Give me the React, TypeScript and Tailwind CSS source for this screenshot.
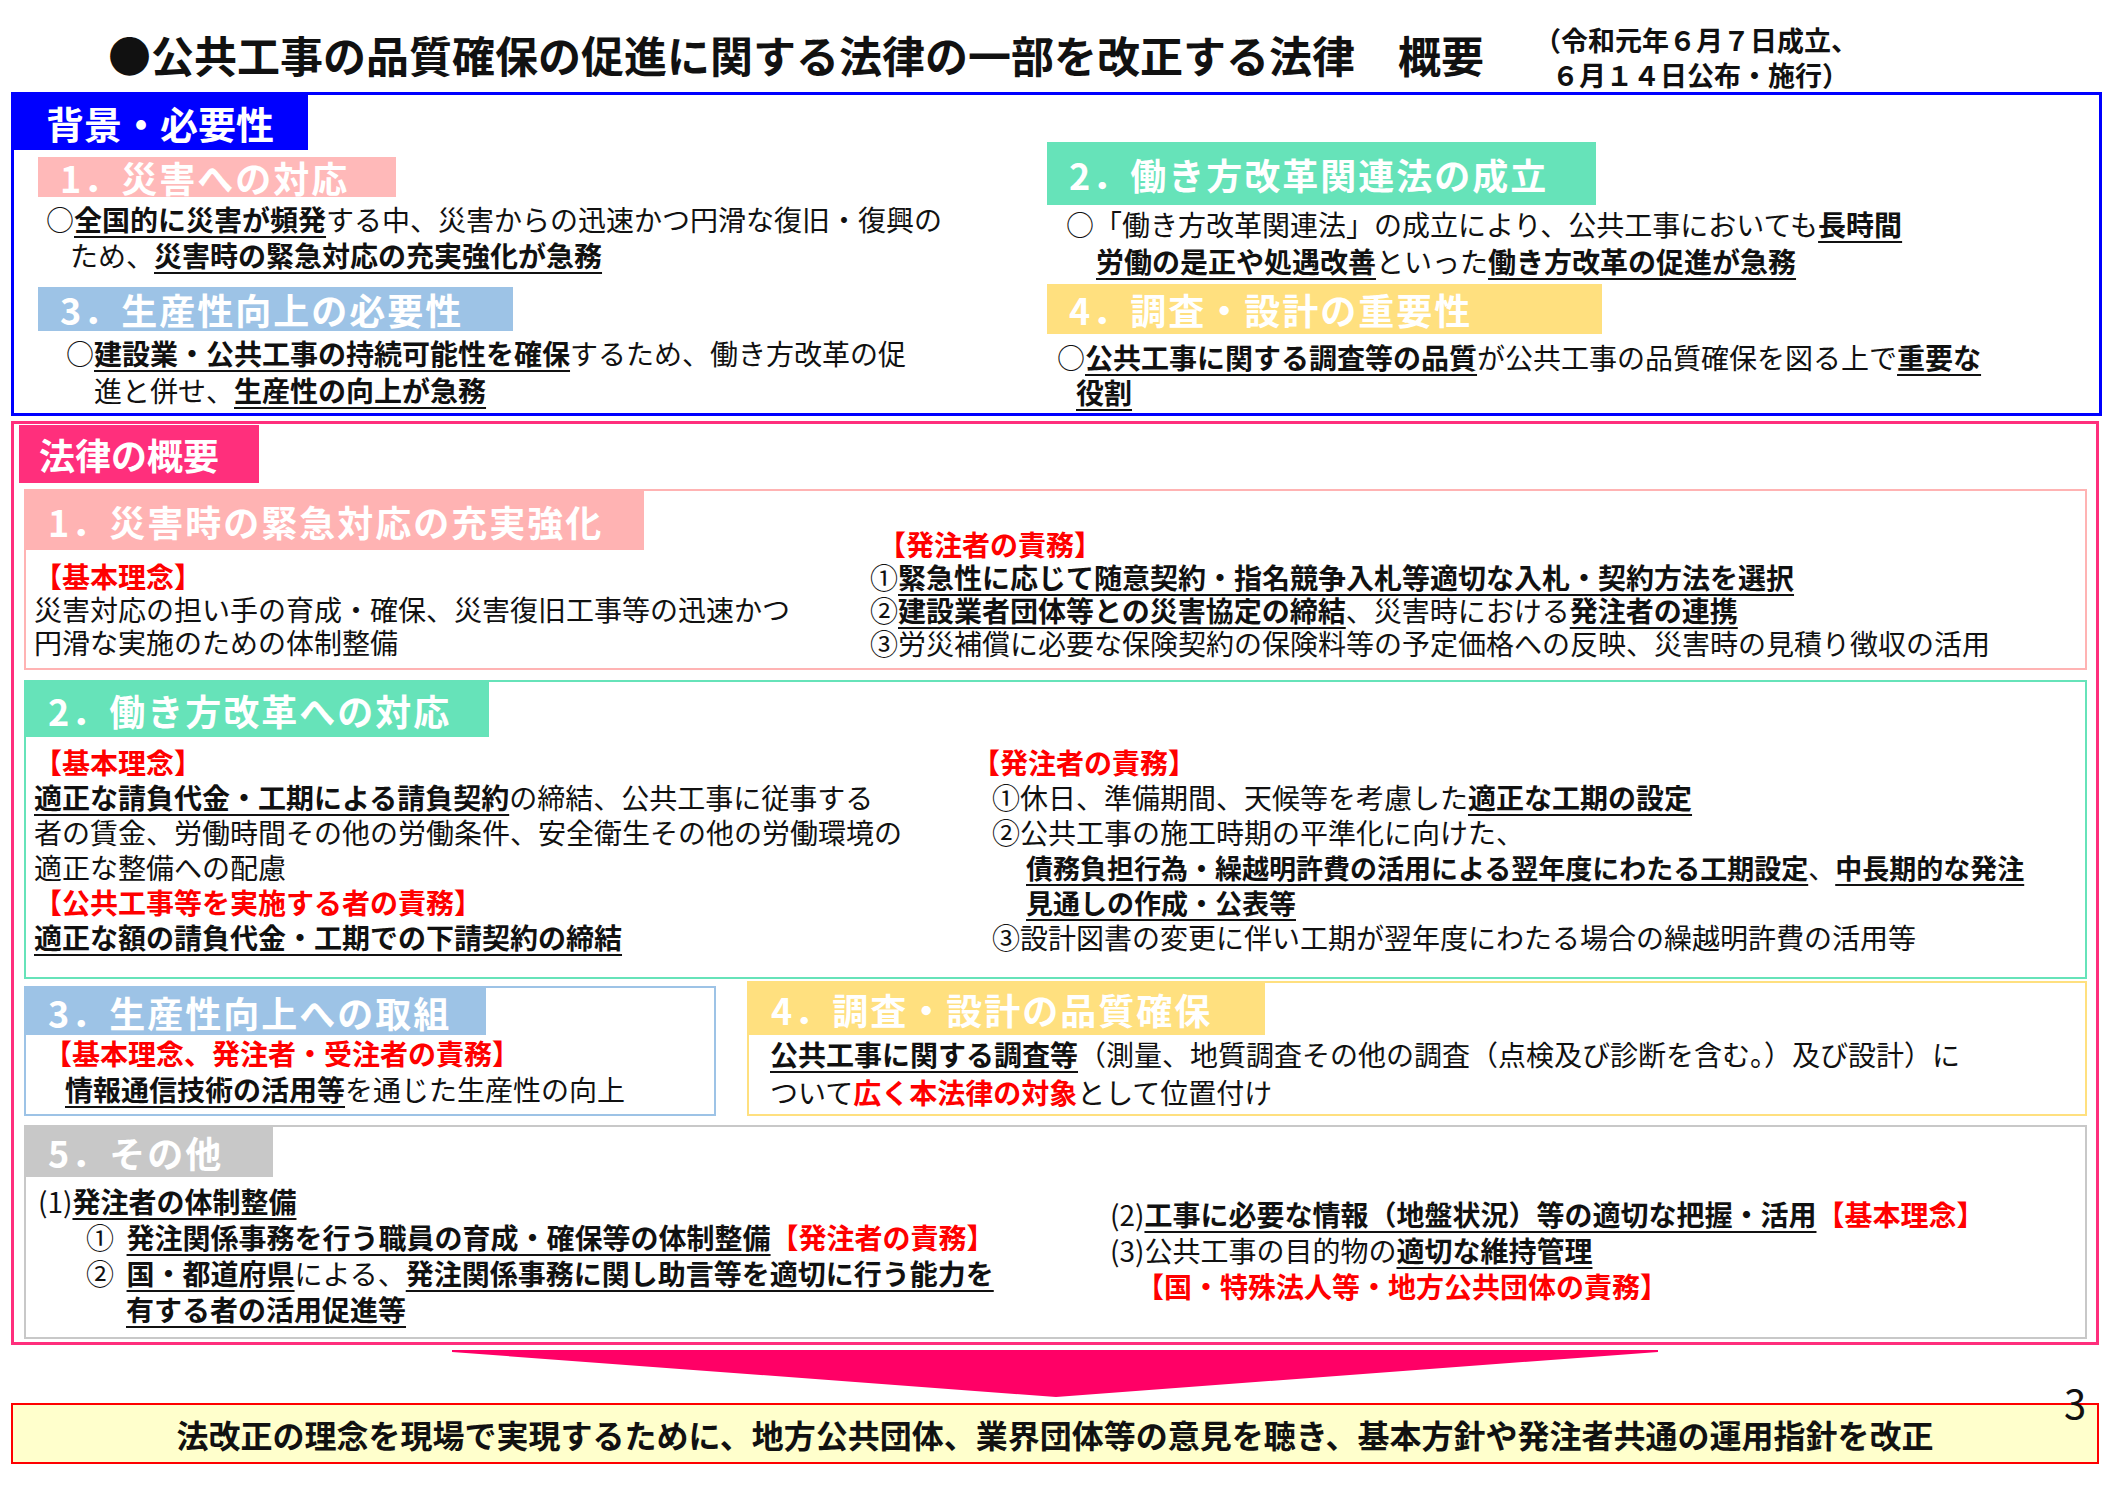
import React from "react";

const U = ({ children }: { children: React.ReactNode }) => (
  <span className="font-bold underline decoration-[2px] underline-offset-[5px]">{children}</span>
);
const R = ({ children }: { children: React.ReactNode }) => (
  <span className="font-bold text-[#ff0000]">{children}</span>
);

const Head = ({ children, cls }: { children: React.ReactNode; cls: string }) => (
  <div className={`flex items-center pl-[22px] text-[36px] font-bold tracking-[2px] text-white ${cls}`}>
    {children}
  </div>
);

export default function App() {
  return (
    <div
      className="relative h-[1489px] w-[2105px] bg-white text-[28px] text-[#111]"
      style={{ fontFamily: '"Noto Sans CJK JP", "Noto Sans", sans-serif' }}
    >
      {/* title */}
      <div className="flex h-[92px] pl-[108px]">
        <div className="pt-[28px] text-[43px] font-bold leading-[52px]">
          ●公共工事の品質確保の促進に関する法律の一部を改正する法律　概要
        </div>
        <div className="ml-[50px] pt-[22px] text-[27px] font-bold leading-[35px]">
          <div>（令和元年６月７日成立、</div>
          <div className="pl-[18px]">６月１４日公布・施行）</div>
        </div>
      </div>

      {/* background */}
      <div className="mx-[11px] grid h-[324px] w-[2091px] grid-cols-[1033px_1fr] border-[3px] border-[#0000ff] whitespace-nowrap">
        <div>
          <div className="flex h-[55px] w-[294px] items-center bg-[#0000ff] pl-[32px] text-[38px] font-bold text-white">
            背景・必要性
          </div>
          <Head cls="ml-[24px] mt-[7px] h-[40px] w-[358px] bg-[#ffb9b9]">1．災害への対応</Head>
          <div className="mt-[4px] pl-[32px] leading-[36px]">
            <div>○<U>全国的に災害が頻発</U>する中、災害からの迅速かつ円滑な復旧・復興の</div>
            <div className="pl-[24px]">ため、<U>災害時の緊急対応の充実強化が急務</U></div>
          </div>
          <Head cls="ml-[24px] mt-[14px] h-[44px] w-[475px] bg-[#9dc3e6]">3．生産性向上の必要性</Head>
          <div className="mt-[4px] pl-[52px] leading-[37px]">
            <div>○<U>建設業・公共工事の持続可能性を確保</U>するため、働き方改革の促</div>
            <div className="pl-[28px]">進と併せ、<U>生産性の向上が急務</U></div>
          </div>
        </div>
        <div className="pt-[47px]">
          <Head cls="h-[63px] w-[549px] bg-[#66e3b9]">2．働き方改革関連法の成立</Head>
          <div className="mt-[1px] pl-[19px] leading-[37px]">
            <div>○「働き方改革関連法」の成立により、公共工事においても<U>長時間</U></div>
            <div className="pl-[30px]"><U>労働の是正や処遇改善</U>といった<U>働き方改革の促進が急務</U></div>
          </div>
          <Head cls="mt-[4px] h-[50px] w-[555px] bg-[#ffe07f]">4．調査・設計の重要性</Head>
          <div className="mt-[6px] pl-[10px] leading-[35px]">
            <div>○<U>公共工事に関する調査等の品質</U>が公共工事の品質確保を図る上で<U>重要な</U></div>
            <div className="pl-[19px]"><U>役割</U></div>
          </div>
        </div>
      </div>

      {/* law overview */}
      <div className="mx-[11px] mt-[5px] h-[924px] w-[2088px] border-[3px] border-[#ff2f7c] pl-[10px] pt-[1px] whitespace-nowrap">
        <div className="-ml-[5px] flex h-[58px] w-[240px] items-center bg-[#ff2f7c] pl-[20px] text-[36px] font-bold text-white">
          法律の概要
        </div>

        {/* 1 */}
        <div className="mt-[6px] grid h-[181px] w-[2063px] grid-cols-[844px_1fr] border-[2px] border-[#ffb3b3]">
          <div>
            <Head cls="h-[59px] w-[618px] bg-[#ffb3b3]">1．災害時の緊急対応の充実強化</Head>
            <div className="mt-[10px] pl-[8px] leading-[33px]">
              <div><R>【基本理念】</R></div>
              <div>災害対応の担い手の育成・確保、災害復旧工事等の迅速かつ</div>
              <div>円滑な実施のための体制整備</div>
            </div>
          </div>
          <div className="pt-[37px] leading-[33px]">
            <div className="pl-[8px]"><R>【発注者の責務】</R></div>
            <div>①<U>緊急性に応じて随意契約・指名競争入札等適切な入札・契約方法を選択</U></div>
            <div>②<U>建設業者団体等との災害協定の締結</U>、災害時における<U>発注者の連携</U></div>
            <div>③労災補償に必要な保険契約の保険料等の予定価格への反映、災害時の見積り徴収の活用</div>
          </div>
        </div>

        {/* 2 */}
        <div className="mt-[10px] h-[299px] w-[2063px] border-[2px] border-[#66e3b9]">
          <Head cls="h-[55px] w-[463px] bg-[#66e3b9]">2．働き方改革への対応</Head>
          <div className="mt-[8px] grid grid-cols-[946px_1fr] leading-[35px]">
            <div className="pl-[8px]">
              <div><R>【基本理念】</R></div>
              <div><U>適正な請負代金・工期による請負契約</U>の締結、公共工事に従事する</div>
              <div>者の賃金、労働時間その他の労働条件、安全衛生その他の労働環境の</div>
              <div>適正な整備への配慮</div>
              <div><R>【公共工事等を実施する者の責務】</R></div>
              <div><U>適正な額の請負代金・工期での下請契約の締結</U></div>
            </div>
            <div>
              <div><R>【発注者の責務】</R></div>
              <div className="pl-[20px]">①休日、準備期間、天候等を考慮した<U>適正な工期の設定</U></div>
              <div className="pl-[20px]">②公共工事の施工時期の平準化に向けた、</div>
              <div className="pl-[54px] text-[27px]"><U>債務負担行為・繰越明許費の活用による翌年度にわたる工期設定</U>、<U>中長期的な発注</U></div>
              <div className="pl-[54px] text-[27px]"><U>見通しの作成・公表等</U></div>
              <div className="pl-[20px]">③設計図書の変更に伴い工期が翌年度にわたる場合の繰越明許費の活用等</div>
            </div>
          </div>
        </div>

        {/* 3 & 4 */}
        <div className="flex w-[2063px] items-start gap-[31px] pt-[2px]">
          <div className="mt-[5px] h-[130px] w-[692px] border-[2px] border-[#9dc3e6]">
            <Head cls="h-[47px] w-[460px] bg-[#9dc3e6]">3．生産性向上への取組</Head>
            <div className="leading-[36px]">
              <div className="pl-[18px]"><R>【基本理念、発注者・受注者の責務】</R></div>
              <div className="pl-[39px]"><U>情報通信技術の活用等</U>を通じた生産性の向上</div>
            </div>
          </div>
          <div className="h-[135px] w-[1340px] border-[2px] border-[#ffe07f]">
            <Head cls="h-[52px] w-[516px] bg-[#ffe07f]">4．調査・設計の品質確保</Head>
            <div className="pl-[21px] leading-[38px]">
              <div><U>公共工事に関する調査等</U>（測量、地質調査その他の調査（点検及び診断を含む。）及び設計）に</div>
              <div>ついて<R>広く本法律の対象</R>として位置付け</div>
            </div>
          </div>
        </div>

        {/* 5 */}
        <div className="mt-[9px] grid h-[214px] w-[2063px] grid-cols-[1084px_1fr] border-[2px] border-[#c8c8c8]">
          <div>
            <Head cls="h-[50px] w-[247px] bg-[#c8c8c8]">5．その他</Head>
            <div className="mt-[6px] leading-[36px]">
              <div className="pl-[12px]">(1)<U>発注者の体制整備</U></div>
              <div className="pl-[60px]">①&nbsp;&nbsp;<U>発注関係事務を行う職員の育成・確保等の体制整備</U><R>【発注者の責務】</R></div>
              <div className="pl-[60px]">②&nbsp;&nbsp;<U>国・都道府県</U>による、<U>発注関係事務に関し助言等を適切に行う能力を</U></div>
              <div className="pl-[100px]"><U>有する者の活用促進等</U></div>
            </div>
          </div>
          <div className="pt-[69px] leading-[36px]">
            <div>(2)<U>工事に必要な情報（地盤状況）等の適切な把握・活用</U><R>【基本理念】</R></div>
            <div>(3)公共工事の目的物の<U>適切な維持管理</U></div>
            <div className="pl-[26px]"><R>【国・特殊法人等・地方公共団体の責務】</R></div>
          </div>
        </div>
      </div>

      {/* arrow */}
      <svg width="2105" height="58" className="block">
        <polygon points="452,5 1658,5 1658,7 1056,52 452,7" fill="#ff0066" />
      </svg>

      <div className="mx-[11px] flex h-[61px] w-[2088px] items-center justify-center border-[2px] border-[#ff0000] bg-[#ffffcc] text-[32px] font-bold">
        法改正の理念を現場で実現するために、地方公共団体、業界団体等の意見を聴き、基本方針や発注者共通の運用指針を改正
      </div>
      <div className="absolute left-[2064px] top-[1378px] text-[40px] leading-[48px]">3</div>
    </div>
  );
}
